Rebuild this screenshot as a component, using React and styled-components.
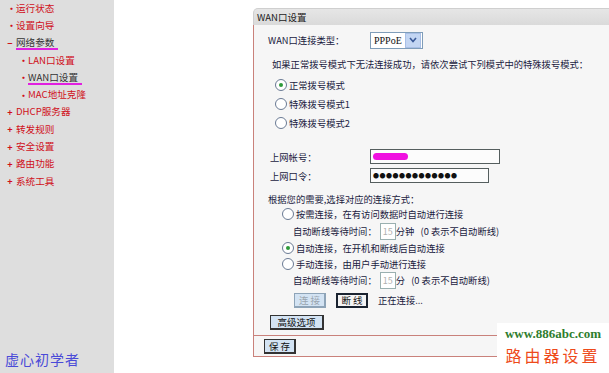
import React from "react";
import styled, { createGlobalStyle } from "styled-components";

const Global = createGlobalStyle`
  body {
    margin: 0;
    background: #ffffff;
    font-family: "Noto Sans CJK SC", "Liberation Sans", sans-serif;
    font-size: 9.3px;
    color: #1a1a40;
    overflow: hidden;
  }
`;

const menu = [
  { label: "运行状态", mark: "•" },
  { label: "设置向导", mark: "•" },
  { label: "网络参数", mark: "−", active: true },
  { label: "LAN口设置", mark: "•", sub: true },
  { label: "WAN口设置", mark: "•", sub: true, active: true },
  { label: "MAC地址克隆", mark: "•", sub: true },
  { label: "DHCP服务器", mark: "+" },
  { label: "转发规则", mark: "+" },
  { label: "安全设置", mark: "+" },
  { label: "路由功能", mark: "+" },
  { label: "系统工具", mark: "+" },
];

export default function App() {
  return (
    <>
      <Global />
      <Page>
        <Sidebar>
          <Menu>
            {menu.map((m) => (
              <MenuItem key={m.label} $sub={m.sub} $active={m.active}>
                <Mark>{m.mark}</Mark>
                <span>{m.label}</span>
              </MenuItem>
            ))}
          </Menu>
          <Signature>虚心初学者</Signature>
        </Sidebar>

        <Main>
          <Panel>
            <TitleBar>WAN口设置</TitleBar>
            <Body>
              <Row $h={18} $mt={6} $pl={14}>
                <Label $w={102}>WAN口连接类型：</Label>
                <Select>
                  <span>PPPoE</span>
                  <Arrow>
                    <svg width="8" height="6" viewBox="0 0 8 6">
                      <path d="M1 1 L4 4.5 L7 1" stroke="#3a5a98" strokeWidth="1.6" fill="none" />
                    </svg>
                  </Arrow>
                </Select>
              </Row>
              <Row $h={16} $mt={7} $pl={18}>如果正常拨号模式下无法连接成功，请依次尝试下列模式中的特殊拨号模式：</Row>
              <Row $h={19} $mt={3} $pl={21}>
                <Radio $on />正常拨号模式
              </Row>
              <Row $h={19} $pl={21}>
                <Radio />特殊拨号模式1
              </Row>
              <Row $h={19} $pl={21}>
                <Radio />特殊拨号模式2
              </Row>

              <Row $h={17} $mt={16} $pl={16}>
                <Label $w={100}>上网帐号：</Label>
                <TextBox $w={126}>
                  <Blot />
                </TextBox>
              </Row>
              <Row $h={17} $mt={2} $pl={16}>
                <Label $w={100}>上网口令：</Label>
                <TextBox $w={115}>
                  <Dots>●●●●●●●●●●●●●</Dots>
                </TextBox>
              </Row>

              <Row $h={16} $mt={7} $pl={14}>根据您的需要,选择对应的连接方式：</Row>
              <Row $h={14} $pl={28}>
                <Radio />按需连接，在有访问数据时自动进行连接
              </Row>
              <Row $h={18} $mt={1} $pl={39}>
                自动断线等待时间：<SmallBox>15</SmallBox>分钟 &nbsp;&nbsp;(0 表示不自动断线)
              </Row>
              <Row $h={15} $pl={28}>
                <Radio $on />自动连接，在开机和断线后自动连接
              </Row>
              <Row $h={17} $pl={28}>
                <Radio />手动连接，由用户手动进行连接
              </Row>
              <Row $h={16} $pl={39}>
                自动断线等待时间：<SmallBox>15</SmallBox>分 &nbsp;&nbsp;(0 表示不自动断线)
              </Row>
              <Row $h={16} $mt={4} $pl={40} $gap={10}>
                <Button $disabled>连 接</Button>
                <Button $dark>断 线</Button>
                <span>正在连接...</span>
              </Row>
              <Row $h={16} $mt={6} $pl={16}>
                <Button $w={54}>高级选项</Button>
              </Row>
              <Footer>
                <Button>保 存</Button>
              </Footer>
            </Body>
          </Panel>
        </Main>

        <Watermark>
          <Site>www.886abc.com</Site>
          <Brand>路由器设置</Brand>
        </Watermark>
      </Page>
    </>
  );
}

const Page = styled.div`
  position: relative;
  display: flex;
  width: 609px;
  height: 373px;
  overflow: hidden;
`;

const Sidebar = styled.div`
  width: 114px;
  flex-shrink: 0;
  background: #dedede;
  display: flex;
  flex-direction: column;
  justify-content: space-between;
`;

const Menu = styled.div`
  display: flex;
  flex-direction: column;
`;

const MenuItem = styled.div`
  height: 17.3px;
  display: flex;
  align-items: center;
  gap: 3px;
  padding-left: ${(p) => (p.$sub ? 19 : 7)}px;
  color: ${(p) => (p.$active ? "#333333" : "#d0101a")};
  font-size: 9.6px;
  white-space: nowrap;

  span:last-child {
    border-bottom: ${(p) => (p.$active ? "2px solid #e020e0" : "2px solid transparent")};
    line-height: 12px;
    padding-right: ${(p) => (p.$active ? 4 : 0)}px;
  }
`;

const Mark = styled.span`
  color: #d0101a;
  width: 6px;
  text-align: center;
  font-weight: bold;
  font-size: 9px;
`;

const Signature = styled.div`
  font-family: "Noto Sans CJK SC", serif;
  color: #4a4ad8;
  font-size: 14px;
  letter-spacing: 1px;
  padding: 0 0 4px 5px;
`;

const Main = styled.div`
  flex: 1;
  padding: 8px 0 0 139px;
  min-width: 0;
`;

const Panel = styled.div`
  width: 380px;
  height: 349px;
  display: flex;
  flex-direction: column;
`;

const TitleBar = styled.div`
  height: 16px;
  line-height: 16px;
  background: linear-gradient(#e6e6e6, #dadada);
  border: 1px solid #cfcfcf;
  border-bottom: none;
  border-top-left-radius: 5px;
  padding-left: 3px;
  font-size: 9.5px;
  color: #222;
`;

const Body = styled.div`
  flex: 1;
  background: #f6f6f6;
  border-left: 1px solid #c9817b;
  border-bottom: 1px solid #c9817b;
  display: flex;
  flex-direction: column;
`;

const Row = styled.div`
  height: ${(p) => p.$h}px;
  margin-top: ${(p) => p.$mt || 0}px;
  padding-left: ${(p) => p.$pl || 0}px;
  display: flex;
  align-items: center;
  gap: ${(p) => p.$gap || 0}px;
  white-space: nowrap;
  font-size: 9.3px;
`;

const Label = styled.span`
  width: ${(p) => p.$w}px;
  flex-shrink: 0;
`;

const Select = styled.div`
  width: 48px;
  height: 15px;
  border: 1px solid #7f9db9;
  background: #fff;
  display: flex;
  align-items: center;
  justify-content: space-between;
  padding-left: 3px;
  font-family: "Liberation Serif", serif;
  font-size: 10px;

  span {
    color: #111;
  }
`;

const Arrow = styled.div`
  width: 14px;
  height: 13px;
  margin-right: 1px;
  background: #c3d6f3;
  border: 1px solid #a8bfe6;
  display: flex;
  align-items: center;
  justify-content: center;
`;

const Radio = styled.span`
  width: 10px;
  height: 10px;
  border-radius: 50%;
  border: 1px solid #6a7a94;
  background: #fff;
  margin-right: 2px;
  flex-shrink: 0;
  display: inline-flex;
  align-items: center;
  justify-content: center;

  &::after {
    content: "";
    width: 4px;
    height: 4px;
    border-radius: 50%;
    background: ${(p) => (p.$on ? "#2e9a3a" : "transparent")};
  }
`;

const TextBox = styled.div`
  width: ${(p) => p.$w}px;
  height: 13px;
  border: 1px solid #555e5e;
  background: #fcfcfc;
  display: flex;
  align-items: center;
  padding-left: 2px;
`;

const Blot = styled.div`
  width: 35px;
  height: 7px;
  border-radius: 4px;
  background: #f010e0;
`;

const Dots = styled.span`
  font-size: 6px;
  letter-spacing: 0.5px;
  color: #111;
`;

const SmallBox = styled.span`
  width: 14px;
  height: 15px;
  border: 1px solid #9ab0b0;
  background: #fff;
  color: #b0b0b0;
  display: inline-flex;
  align-items: center;
  justify-content: center;
  font-size: 9px;
  margin-left: 3px;
`;

const Button = styled.span`
  min-width: ${(p) => p.$w || 32}px;
  height: 15px;
  padding: 0 3px;
  box-sizing: border-box;
  display: inline-flex;
  align-items: center;
  justify-content: center;
  font-size: 9.5px;
  background: ${(p) => (p.$dark ? "#f4f4f4" : "#d3e3f3")};
  color: ${(p) => (p.$disabled ? "#9aa6b0" : "#111")};
  border: ${(p) =>
    p.$dark ? "2px solid #1a2330" : p.$disabled ? "1px solid #8ea4b8" : "1px solid #333"};
  border-right-width: 2px;
  border-bottom-width: 2px;
`;

const Footer = styled.div`
  margin-top: auto;
  height: 20px;
  border-top: 1px solid #c9817b;
  display: flex;
  align-items: center;
  padding-left: 10px;
`;

const Watermark = styled.div`
  position: absolute;
  right: 0;
  bottom: 0;
  width: 112px;
  height: 50px;
  background: #fff;
  display: flex;
  flex-direction: column;
  align-items: center;
  padding-top: 3px;
  box-sizing: border-box;
`;

const Site = styled.div`
  font-family: "Liberation Serif", serif;
  font-weight: bold;
  font-size: 13px;
  color: #2e7d2e;
`;

const Brand = styled.div`
  font-family: "Noto Sans CJK SC", serif;
  font-size: 16px;
  letter-spacing: 3px;
  color: #ee4a1a;
  margin-top: 1px;
`;
